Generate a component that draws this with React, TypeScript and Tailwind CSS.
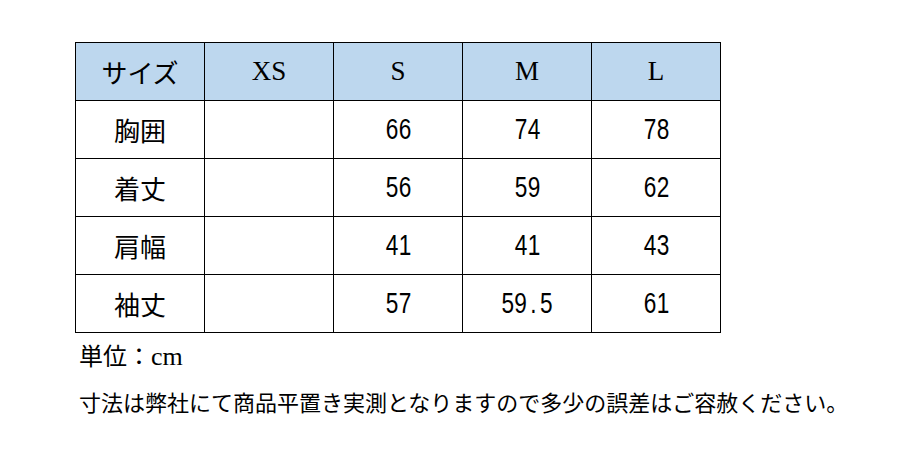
import React from 'react';

const sizes = ['XS', 'S', 'M', 'L'];

const rows: { label: string; values: string[] }[] = [
  { label: '胸囲', values: ['', '66', '74', '78'] },
  { label: '着丈', values: ['', '56', '59', '62'] },
  { label: '肩幅', values: ['', '41', '41', '43'] },
  { label: '袖丈', values: ['', '57', '59.5', '61'] },
];

// half-width monospaced, condensed digits
const Num: React.FC<{ value: string }> = ({ value }) => (
  <span className="inline-flex scale-x-[0.78] text-[29px] leading-none font-['Liberation_Sans',sans-serif]">
    {value.split('').map((ch, i) => (
      <span key={i} className="inline-block w-[16.5px] text-center">
        {ch}
      </span>
    ))}
  </span>
);

const App: React.FC = () => {
  return (
    <div className="w-[900px] h-[462px] bg-white text-black pt-[42px] pl-[75px] font-['Noto_Sans_CJK_JP',sans-serif]">
      <table className="border-collapse">
        <thead>
          <tr className="bg-[#bdd7ee]">
            <th className="w-[129px] h-[58px] border border-black p-0 font-normal text-[26px]">サイズ</th>
            {sizes.map((s) => (
              <th
                key={s}
                className="w-[129px] h-[58px] border border-black p-0 font-normal text-[27px] font-['Liberation_Serif',serif]"
              >
                {s}
              </th>
            ))}
          </tr>
        </thead>
        <tbody>
          {rows.map((r) => (
            <tr key={r.label}>
              <td className="h-[58px] border border-black p-0 text-center text-[26px]">{r.label}</td>
              {r.values.map((v, i) => (
                <td key={i} className="h-[58px] border border-black p-0 text-center">
                  {v && <Num value={v} />}
                </td>
              ))}
            </tr>
          ))}
        </tbody>
      </table>

      {/* Notes */}
      <div className="pl-[4px] mt-[7px] flex items-baseline leading-[30px]">
        <span className="text-[24px]">単位：</span>
        <span className="text-[26px] font-['Liberation_Serif',serif]">cm</span>
      </div>
      <div className="pl-[4px] mt-[14px] text-[22px] leading-[30px]">
        寸法は弊社にて商品平置き実測となりますので多少の誤差はご容赦ください。
      </div>
    </div>
  );
};

export default App;
